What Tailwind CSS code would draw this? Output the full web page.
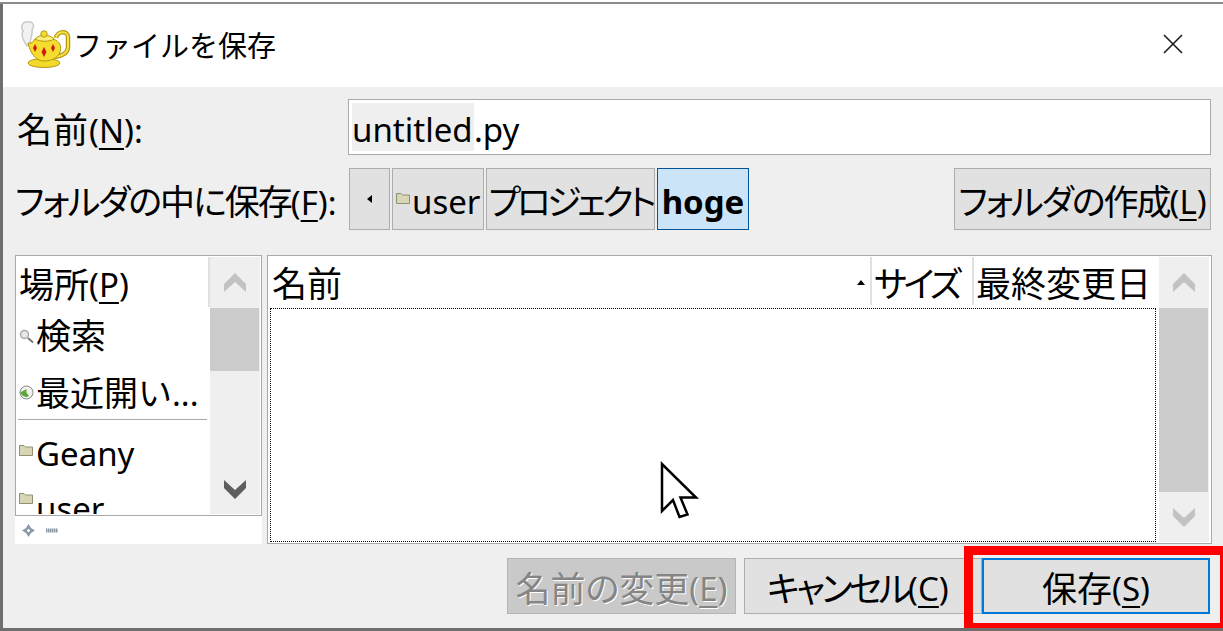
<!DOCTYPE html>
<html lang="ja">
<head>
    <meta charset="UTF-8">
    <title>ファイルを保存</title>
    <script src="https://cdn.jsdelivr.net/npm/@tailwindcss/browser@4"></script>
</head>
<body class="bg-white overflow-hidden font-['Noto_Sans','Noto_Sans_CJK_JP',sans-serif] text-black">
<div class="relative w-[1223px] h-[631px] overflow-hidden flex flex-col">

    <!-- editor text behind the dialog -->
    <div class="h-[4px] shrink-0 overflow-hidden relative bg-[linear-gradient(#ffffff_50%,#8c8c8c_50%)]">
        <div class="absolute left-[20px] bottom-[-2px] whitespace-nowrap leading-none text-[#b00000] text-[31px] tracking-[2.5px] font-['Liberation_Mono',monospace]">HANTABILITY or FITNESS FOR A PARTICULAR PURPOSE.</div>
    </div>

    <div class="flex-1 flex flex-col border-l-[3px] border-b-[3px] border-[#6e6e6e]">
        <!-- title bar -->
        <div class="h-[83px] shrink-0 bg-white flex items-center relative">
            <svg class="ml-[17px] w-[52px] h-[50px]" viewBox="0 0 52 50">
                <path d="M7 25C3 19 1 13 3 10C0 5 3 0 8 1C13 0 15 5 12 9C13 13 10 17 10 23Z" fill="#f2f2f2" stroke="#c9c9c9" stroke-width="1.5"/>
                <path d="M36 17C37 10 48 9 48 16V26C48 33 41 35 35 36" fill="none" stroke="#b59a10" stroke-width="4.5"/>
                <path d="M36 17C37 10 48 9 48 16V26C48 33 41 35 35 36" fill="none" stroke="#f6e04a" stroke-width="2"/>
                <ellipse cx="24" cy="42" rx="16" ry="4.500" fill="#f2d92c" stroke="#b59a10" stroke-width="1"/>
                <path d="M8 22C11 23 13 21 15 18H33C40 20 42 26 40 31C38 37 31 40 24 40C15 40 10 31 8 22Z" fill="#f5dc2e" stroke="#b59a10" stroke-width="1"/>
                <path d="M15 18C19 13 30 13 34 18C30 21 20 21 15 18Z" fill="#fbee7a" stroke="#b59a10" stroke-width="1"/>
                <circle cx="24" cy="13" r="3.200" fill="#f5dc2e" stroke="#b59a10" stroke-width="1"/>
                <path d="M15 23L17 27L15 31L13 27Z" fill="#d01818"/>
                <path d="M24 26L26.500 31L24 36L21.500 31Z" fill="#d01818"/>
                <path d="M33 23L35 27L33 31L31 27Z" fill="#d01818"/>
            </svg>
            <span class="ml-[1px] text-[29px] leading-none">ファイルを保存</span>
            <svg class="absolute left-[1160px] top-[30px] w-[20px] h-[20px]" viewBox="0 0 20 20">
                <path d="M1 1L19 19M19 1L1 19" stroke="#1a1a1a" stroke-width="1.6" fill="none"/>
            </svg>
        </div>

        <div class="flex-1 bg-[#efefef] flex flex-col text-[33px] leading-none">
            <!-- name row -->
            <div class="mt-[12px] h-[56px] shrink-0 flex items-center pl-[14px]">
                <label class="w-[331px] pt-[4px]"><span class="text-[35px] tracking-[1px]">名前</span>(<span class="underline underline-offset-[5px] decoration-2">N</span>):</label>
                <div class="w-[863px] h-full bg-white border border-[#a9a9a9] flex items-center pl-[3px] py-[3px]">
                    <span class="h-full flex items-center pt-[4px] bg-[#efefef] w-[122px]">untitled</span><span class="pt-[4px]">.py</span>
                </div>
            </div>

            <!-- path bar -->
            <div class="mt-[13px] h-[62px] shrink-0 flex items-center pl-[12px]">
                <label class="w-[334px] whitespace-nowrap pt-[4px]"><span class="[font-feature-settings:'palt'] text-[35px] tracking-[-2px]">フォルダの中に保存</span>(<span class="underline underline-offset-[5px] decoration-2">F</span>):</label>
                <div class="flex gap-[2px] h-full">
                    <div class="w-[41px] bg-[#e1e1e1] border border-[#adadad] flex items-center justify-center">
                        <svg class="w-[5px] h-[8px]" viewBox="0 0 5 8"><path d="M5 0V8L0 4Z" fill="#000"/></svg>
                    </div>
                    <div class="w-[92px] bg-[#e1e1e1] border border-[#adadad] flex items-center pl-[3px] pt-[4px]">
                        <svg class="w-[14px] h-[12px] shrink-0 mb-[6px]" viewBox="0 0 14 12"><path d="M.5 1.5H5L6.5 3H13.500V11.500H.5Z" fill="#d6d6b4" stroke="#8f8f75"/></svg>
                        <span class="ml-[2px]">user</span>
                    </div>
                    <div class="w-[169px] bg-[#e1e1e1] border border-[#adadad] flex items-center justify-center whitespace-nowrap pt-[4px] text-[35px] tracking-[-4px] [font-feature-settings:'palt']">プロジェクト</div>
                    <div class="w-[92px] bg-[#cce4f7] border border-[#005499] flex items-center justify-center font-bold pt-[4px]">hoge</div>
                </div>
                <div class="ml-[205px] w-[257px] h-full bg-[#e1e1e1] border border-[#adadad] flex items-center justify-center whitespace-nowrap pt-[4px]"><span class="text-[35px] tracking-[-2px] [font-feature-settings:'palt']">フォルダの作成</span>(<span class="underline underline-offset-[5px] decoration-2">L</span>)</div>
            </div>

            <!-- places + file list -->
            <div class="mt-[25px] h-[289px] shrink-0 flex pl-[12px]">
                <div class="w-[247px] flex flex-col">
                    <div class="h-[261px] border border-[#a9a9a9] p-[1px] bg-white flex overflow-hidden">
                        <div class="w-[193px] shrink-0 flex flex-col overflow-hidden">
                            <div class="h-[50px] shrink-0 flex items-center pl-[2px] pt-[4px] border-r-2 border-[#e0e0e0]"><span class="text-[35px]">場所</span>(<span class="underline underline-offset-[5px] decoration-2">P</span>)</div>
                            <div class="h-[58px] shrink-0 flex items-center pl-[2px]">
                                <svg class="w-[15px] h-[15px] shrink-0" viewBox="0 0 15 15"><circle cx="5.500" cy="5.500" r="4" fill="#e8e8e8" stroke="#a8a8a8" stroke-width="1.500"/><path d="M9 9L14 13.500" stroke="#777" stroke-width="2"/></svg>
                                <span class="ml-[2px] text-[35px] mb-[2px]">検索</span>
                            </div>
                            <div class="h-[54px] shrink-0 flex items-center pl-[2px] whitespace-nowrap">
                                <svg class="w-[15px] h-[15px] shrink-0" viewBox="0 0 15 15"><circle cx="7.500" cy="7.500" r="6.500" fill="#f2f2f2" stroke="#888"/><path d="M1 7.500L7.500 4V7.500L10 11C7 13 3 11.500 1 7.500Z" fill="#5da838"/></svg>
                                <span class="ml-[2px] pt-[2px]"><span class="text-[34px]">最近開い</span>...</span>
                            </div>
                            <div class="h-[1px] shrink-0 bg-[#a9a9a9] ml-[1px] mr-[3px]"></div>
                            <div class="h-[63px] shrink-0 flex items-center pl-[2px]">
                                <svg class="w-[14px] h-[12px] shrink-0 mb-[4px]" viewBox="0 0 14 12"><path d="M.5 1.500H5L6.500 3H13.500V11.500H.5Z" fill="#d6d6b4" stroke="#8f8f75"/></svg>
                                <span class="ml-[3px] pt-[4px]">Geany</span>
                            </div>
                            <div class="h-[60px] shrink-0 flex items-start pl-[2px] pt-[7px]">
                                <svg class="w-[14px] h-[12px] shrink-0 mt-[2px]" viewBox="0 0 14 12"><path d="M.5 1.500H5L6.500 3H13.500V11.500H.5Z" fill="#d6d6b4" stroke="#8f8f75"/></svg>
                                <span class="ml-[3px] pt-[2px]">user</span>
                            </div>
                        </div>
                        <div class="w-[50px] shrink-0 bg-[#efefef] flex flex-col relative">
                            <svg class="absolute left-[14px] top-[15px] w-[22px] h-[20px]" viewBox="0 0 22 20"><path d="M0 12L11 1L22 12V20L11 10L0 20Z" fill="#c2c2c2"/></svg>
                            <div class="mt-[51px] w-[49px] h-[63px] bg-[#cbcbcb]"></div>
                            <svg class="absolute left-[14px] top-[223px] w-[22px] h-[20px]" viewBox="0 0 22 20"><path d="M0 0L11 10L22 0V8L11 19L0 8Z" fill="#5e5e5e"/></svg>
                        </div>
                    </div>
                    <div class="h-[28px] bg-white flex items-center pl-[7px] gap-[11px]">
                        <svg class="w-[13px] h-[13px]" viewBox="0 0 13 13"><path d="M6.500 0L9 4L13 6.500L9 9L6.500 13L4 9L0 6.500L4 4Z" fill="#8a98a6"/><circle cx="6.500" cy="6.500" r="1.500" fill="#fff"/></svg>
                        <svg class="w-[12px] h-[5px]" viewBox="0 0 12 5"><path d="M0 2.500H12" stroke="#8a96a2" stroke-width="4" stroke-dasharray="1.500 .5"/></svg>
                    </div>
                </div>

                <div class="ml-[5px] w-[945px] border border-[#a9a9a9] p-[1px] bg-white flex">
                    <div class="w-[889px] shrink-0 flex flex-col">
                        <div class="h-[51px] shrink-0 flex items-center pl-[3px] pb-[3px]">
                            <div class="w-[600px] h-full flex items-center relative border-r-2 border-[#e0e0e0] pt-[4px]">
                                <span class="text-[35px]">名前</span>
                                <svg class="absolute right-[5px] top-[23px] w-[8px] h-[5px]" viewBox="0 0 8 5"><path d="M4 0L8 5H0Z" fill="#000"/></svg>
                            </div>
                            <div class="w-[102px] h-full flex items-center pl-[2px] pt-[4px] border-r-2 border-[#e0e0e0] whitespace-nowrap text-[35px] tracking-[-3.5px] [font-feature-settings:'palt']">サイズ</div>
                            <div class="w-[182px] h-full flex items-center pl-[2px] pt-[4px] whitespace-nowrap text-[35px]">最終変更日</div>
                        </div>
                        <div class="ml-[1px] w-[886px] h-[234px] border border-dotted border-black"></div>
                    </div>
                    <div class="ml-[1px] w-[50px] h-[285px] bg-[#efefef] relative">
                        <svg class="absolute left-[14px] top-[15px] w-[22px] h-[20px]" viewBox="0 0 22 20"><path d="M0 12L11 1L22 12V20L11 10L0 20Z" fill="#c2c2c2"/></svg>
                        <div class="mt-[51px] w-[49px] h-[184px] bg-[#cbcbcb]"></div>
                        <svg class="absolute left-[14px] top-[251px] w-[22px] h-[20px]" viewBox="0 0 22 20"><path d="M0 0L11 10L22 0V8L11 19L0 8Z" fill="#c2c2c2"/></svg>
                    </div>
                </div>
            </div>

            <!-- action buttons -->
            <div class="mt-[14px] h-[56px] shrink-0 flex pl-[504px]">
                <div class="w-[229px] bg-[#c9c9c9] border border-[#b5b5b5] flex items-center justify-center whitespace-nowrap pt-[4px] text-[#858585] [text-shadow:1px_1px_0_#ffffff]"><span class="text-[35px] [font-feature-settings:'palt']">名前の変更</span>(<span class="underline underline-offset-[5px] decoration-2">E</span>)</div>
                <div class="ml-[8px] w-[238px] bg-[#e1e1e1] border border-[#adadad] flex items-center justify-start pl-[22px] pt-[4px] whitespace-nowrap"><span class="text-[35px] tracking-[-3.5px] [font-feature-settings:'palt']">キャンセル</span>(<span class="underline underline-offset-[5px] decoration-2">C</span>)</div>
                <div class="w-[228px] bg-[#e1e1e1] border-2 border-[#0078d7] flex items-center justify-center whitespace-nowrap pt-[4px]"><span class="text-[35px]">保存</span>(<span class="underline underline-offset-[5px] decoration-2">S</span>)</div>
            </div>
        </div>
    </div>

    <!-- red highlight round the save button -->
    <div class="absolute left-[964px] top-[546px] w-[259px] h-[82px] border-[9px] border-r-[3px] border-b-[5px] border-[#ff0000]"></div>

    <!-- mouse pointer -->
    <svg class="absolute left-[655px] top-[458px] w-[50px] h-[65px]" viewBox="655 458 50 65">
        <path d="M662 464V511L673 500L679.500 517L687.500 514.500L680.500 497.500H696Z" fill="#fff" stroke="#000" stroke-width="2.500"/>
    </svg>
</div>
</body>
</html>
